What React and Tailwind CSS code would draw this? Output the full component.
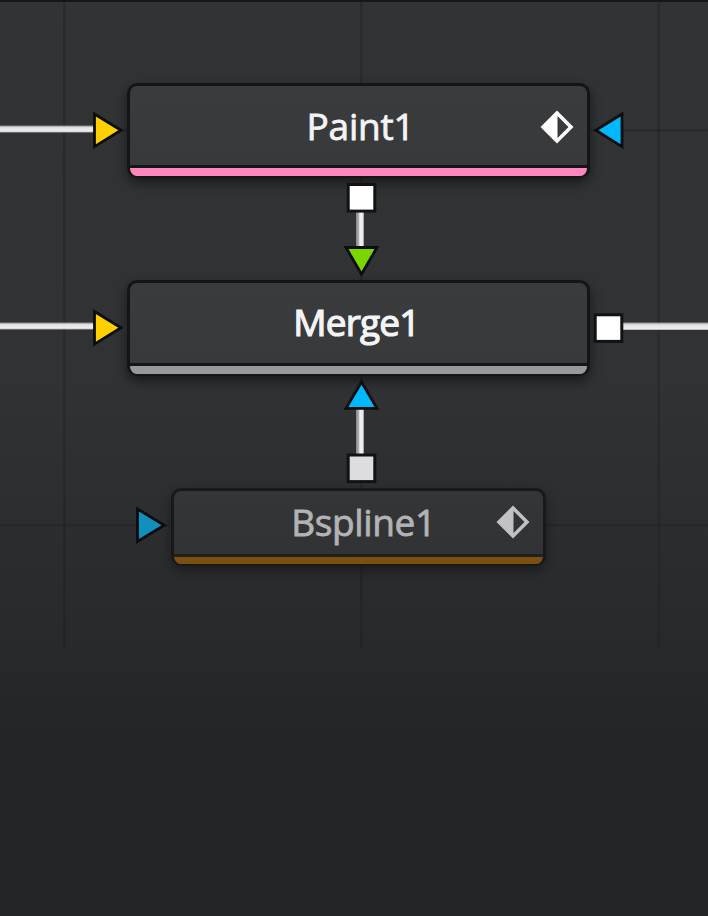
function KeyframeIcon({ className }) {
  return (
    <svg viewBox="0 0 34 34" className={className} aria-hidden="true">
      <path d="M17 0.5 L33.5 17 L17 33.5 L0.5 17 Z M17.5 6 V28 L28.5 17 Z" fill="currentColor" fillRule="evenodd" />
    </svg>
  );
}

function Node({ label, className, barClass, labelClass, iconClass }) {
  return (
    <div className={`absolute flex flex-col overflow-hidden rounded-[10px] border-[3px] border-b-2 border-solid ${className}`}>
      <div className="grid min-h-0 flex-1 grid-cols-[58px_1fr_58px] items-center justify-items-center">
        <span className={`col-start-2 whitespace-nowrap text-[37px] leading-none ${labelClass}`}>{label}</span>
        {iconClass && <KeyframeIcon className={`mr-0.5 size-[34px] ${iconClass}`} />}
      </div>
      <div className={`border-t-[3px] ${barClass}`} />
    </div>
  );
}

function Wires() {
  return (
    <svg viewBox="0 0 708 916" className="absolute inset-0 h-[916px] w-[708px]" aria-hidden="true">
      <defs>
        <linearGradient id="horizontalWire" x1="0" y1="0" x2="0" y2="1">
          <stop offset="0" stopColor="#8b8b8d" />
          <stop offset="0.3" stopColor="#e2e2e4" />
          <stop offset="0.8" stopColor="#eeeeef" />
          <stop offset="1" stopColor="#a4a4a6" />
        </linearGradient>
        <linearGradient id="verticalWire" x1="0" y1="0" x2="1" y2="0">
          <stop offset="0" stopColor="#858587" />
          <stop offset="0.3" stopColor="#aaaaac" />
          <stop offset="0.5" stopColor="#f2f2f3" />
          <stop offset="0.85" stopColor="#e8e8e9" />
          <stop offset="1" stopColor="#858587" />
        </linearGradient>
      </defs>
      <g fill="url(#horizontalWire)">
        <rect x="0" y="125.5" width="95" height="7" />
        <rect x="0" y="322.5" width="95" height="7" />
        <rect x="622" y="322.5" width="86" height="7.5" />
      </g>
      <g fill="url(#verticalWire)">
        <rect x="356" y="210" width="8" height="38" />
        <rect x="356" y="407" width="8" height="48" />
      </g>
      <g stroke="#0c0d0e" strokeWidth="2.8" strokeLinejoin="miter">
        <path d="M94.5 114 L121 130.3 L94.5 146.6 Z" fill="#ffd000" />
        <path d="M94.5 311.5 L121 327.8 L94.5 344.1 Z" fill="#ffd000" />
        <path d="M622 114 L595.8 130.3 L622 146.6 Z" fill="#00b9fd" />
        <path d="M346 247.5 L377 247.5 L361.5 274.3 Z" fill="#7ad600" />
        <path d="M346 408.3 L377 408.3 L361.5 382 Z" fill="#00b9fd" />
        <path d="M137.5 509 L164.3 525.2 L137.5 541.5 Z" fill="#118fbd" />
      </g>
      <g stroke="#111214" strokeWidth="3">
        <rect x="348.2" y="184.5" width="26.6" height="26.6" fill="#fff" />
        <rect x="595.2" y="314.8" width="26.6" height="26.6" fill="#fff" />
        <rect x="348.2" y="455" width="26.6" height="26.6" fill="#dddddf" />
      </g>
    </svg>
  );
}

function Grid() {
  return (
    <svg viewBox="0 0 708 916" className="absolute inset-0 h-[916px] w-[708px]" aria-hidden="true">
      <g fill="#17181b" fillOpacity="0.26">
        <rect x="63" y="0" width="2.5" height="648" />
        <rect x="360" y="0" width="2.5" height="648" />
        <rect x="657.5" y="0" width="2.5" height="648" />
        <rect x="0" y="129" width="708" height="2.5" />
        <rect x="0" y="524" width="708" height="2.5" />
      </g>
    </svg>
  );
}

export default function App() {
  return (
    <main className="relative h-[916px] w-[708px] overflow-hidden bg-[linear-gradient(to_bottom,#323335_0px,#313234_380px,#2d2e30_500px,#292a2d_620px,#242529_740px,#242529_916px)] font-['Open_Sans','Noto_Sans',sans-serif]">
      <Grid />
      <div className="absolute inset-x-0 top-0 h-0.5 bg-[linear-gradient(#111214,#1b1c1e)]" />
      <Node
        label="Paint1"
        className="left-[127px] top-[83px] h-[95px] w-[463px] border-[#141517] bg-[linear-gradient(#3a3b3d,#38393b)] shadow-[0_5px_12px_rgba(0,0,0,0.5)]"
        barClass="h-[11px] border-t-[#141517] bg-[#ff87bd]"
        labelClass="pl-[4px] tracking-[-0.2px] text-[#f4f4f6] [-webkit-text-stroke:0.8px_#f4f4f6]"
        iconClass="mt-[3px] text-white"
      />
      <Node
        label="Merge1"
        className="left-[127px] top-[280px] h-[96px] w-[463px] border-[#141517] bg-[linear-gradient(#3a3b3d,#38393b)] shadow-[0_5px_12px_rgba(0,0,0,0.5)]"
        barClass="h-[11px] border-t-[#141517] bg-[#98999b]"
        labelClass="pb-[3px] pr-[4px] tracking-[-0.8px] text-[#f4f4f6] [-webkit-text-stroke:1.2px_#f4f4f6]"
      />
      <Node
        label="Bspline1"
        className="left-[171px] top-[488px] h-[78px] w-[375px] border-[#18191b] bg-[linear-gradient(#343537,#313234)] shadow-[0_5px_12px_rgba(0,0,0,0.35)]"
        barClass="h-[10px] border-t-[#1f2022] bg-[#7c5110]"
        labelClass="pb-[2px] pl-[10px] tracking-[-0.4px] text-[#b3b3b5] [-webkit-text-stroke:0.8px_#b3b3b5]"
        iconClass="mb-[1px] text-[#c2c2c4]"
      />
      <Wires />
    </main>
  );
}
